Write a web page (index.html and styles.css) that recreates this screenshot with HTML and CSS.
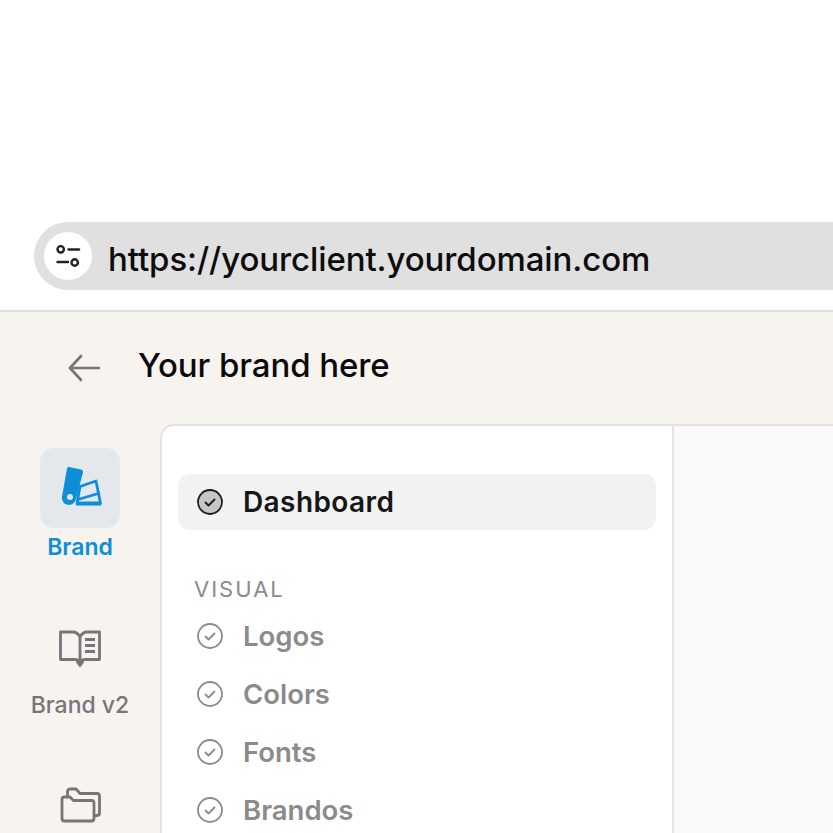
FILE: index.html
```html
<!DOCTYPE html>
<html>
<head>
    <title>Your brand here</title>
    <link rel="stylesheet" href="styles.css">
</head>
<body>
    <div class="top">
        <div class="url-bar">
            <div class="url-icon">
                <svg width="26" height="26" viewBox="0 0 26 26" fill="none" stroke="#222" stroke-width="2.4" stroke-linecap="round">
                    <circle cx="5.7" cy="6.300" r="3.200"/>
                    <path d="M13.500 6.500H24"/>
                    <path d="M2.500 19H13"/>
                    <circle cx="19.700" cy="19.500" r="3.200"/>
                </svg>
            </div>
            <span class="url-text">https://yourclient.yourdomain.com</span>
        </div>
    </div>
    <div class="app">
        <div class="header">
            <svg class="back" width="32" height="28" viewBox="0 0 32 28" fill="none" stroke="#77757a" stroke-width="2.6" stroke-linecap="round" stroke-linejoin="round">
                <path d="M31 14H2"/>
                <path d="M13 2 2 14l11 12"/>
            </svg>
            <span class="brand-title">Your brand here</span>
        </div>
        <div class="content">
            <div class="sidebar">
                <div class="side-item active">
                    <div class="side-icon">
                        <svg width="44" height="44" viewBox="0 0 44 44">
                            <path d="M22 20.500 38 15l4.500 22.500H19z" fill="#e4e8ec" stroke="#0d8fd8" stroke-width="2.800" stroke-linejoin="round"/>
                            <path d="M20 33.500 42 27" fill="none" stroke="#0d8fd8" stroke-width="2.600"/>
                            <path d="M18 35.500h25v4H18z" fill="#0d8fd8"/>
                            <path d="M11 1l12 2.500c1.500.3 2.200 1.500 2 3L18 33c-1 4-4.500 6.500-8.500 5.800C5.500 38 3.300 34 4.100 30L9 2.500c.2-1 1-1.700 2-1.500z" fill="#0d8fd8"/>
                            <circle cx="12" cy="31" r="3" fill="#e4e8ec"/>
                        </svg>
                    </div>
                    <span class="side-label">Brand</span>
                </div>
                <div class="side-item">
                    <div class="side-icon">
                        <svg width="44" height="44" viewBox="0 -1 44 44" fill="none" stroke="#77757a" stroke-width="2.800" stroke-linejoin="round">
                            <path d="M22 9.500c-2-3-4-4.500-7-4.500H2.500v27.500H16c2.500 0 5 .5 6 2 1-1.500 3.500-2 6-2h13.500V5H29c-3 0-5 1.500-7 4.500z"/>
                            <path d="M22 9.500V35"/>
                            <path d="M27 12.500h10M27 18.500h10M27 24.500h10"/>
                            <path d="M19.500 35 22 38.500l2.500-3.500z" fill="#77757a"/>
                        </svg>
                    </div>
                    <span class="side-label">Brand v2</span>
                </div>
                <div class="side-item">
                    <div class="side-icon">
                        <svg width="44" height="36" viewBox="0 0 44 36" fill="none" stroke="#77757a" stroke-width="2.800" stroke-linejoin="round">
                            <path d="M4 12.500c0-1.500 1-2.500 2.500-2.500H12l3.500 3.500h18c1.500 0 2.500 1 2.500 2.500V31.500c0 1.500-1 2.500-2.500 2.500h-27C5 34 4 33 4 31.500z"/>
                            <path d="M9.500 10V4.500C9.500 3 10.500 2 12 2h6l4 4.500h17c1.500 0 2.500 1 2.500 2.500V26c0 1.500-1 2.500-2.500 2.500h-3"/>
                        </svg>
                    </div>
                </div>
            </div>
            <div class="panel">
                <div class="nav">
                    <div class="nav-row selected">
                        <svg class="check" width="28" height="28" viewBox="0 0 28 28" fill="#c6c6c6" stroke="#1a1a1a" stroke-width="1.800" stroke-linecap="round" stroke-linejoin="round">
                            <circle cx="14" cy="14" r="12"/>
                            <path d="m9.500 14.500 3 3 6-6" fill="none"/>
                        </svg>
                        <span>Dashboard</span>
                    </div>
                    <div class="nav-heading">VISUAL</div>
                    <div class="nav-row">
                        <svg class="check" width="28" height="28" viewBox="0 0 28 28" fill="none" stroke="#8b8b8b" stroke-width="1.800" stroke-linecap="round" stroke-linejoin="round">
                            <circle cx="14" cy="14" r="12"/>
                            <path d="m9.500 14.500 3 3 6-6"/>
                        </svg>
                        <span>Logos</span>
                    </div>
                    <div class="nav-row">
                        <svg class="check" width="28" height="28" viewBox="0 0 28 28" fill="none" stroke="#8b8b8b" stroke-width="1.800" stroke-linecap="round" stroke-linejoin="round">
                            <circle cx="14" cy="14" r="12"/>
                            <path d="m9.500 14.500 3 3 6-6"/>
                        </svg>
                        <span>Colors</span>
                    </div>
                    <div class="nav-row">
                        <svg class="check" width="28" height="28" viewBox="0 0 28 28" fill="none" stroke="#8b8b8b" stroke-width="1.800" stroke-linecap="round" stroke-linejoin="round">
                            <circle cx="14" cy="14" r="12"/>
                            <path d="m9.500 14.500 3 3 6-6"/>
                        </svg>
                        <span>Fonts</span>
                    </div>
                    <div class="nav-row">
                        <svg class="check" width="28" height="28" viewBox="0 0 28 28" fill="none" stroke="#8b8b8b" stroke-width="1.800" stroke-linecap="round" stroke-linejoin="round">
                            <circle cx="14" cy="14" r="12"/>
                            <path d="m9.500 14.500 3 3 6-6"/>
                        </svg>
                        <span>Brandos</span>
                    </div>
                </div>
                <div class="preview"></div>
            </div>
        </div>
    </div>
</body>
</html>
```

FILE: styles.css
```css
html, body {
    height: 100%;
}

body {
    margin: 0;
    overflow: hidden;
    background-color: #fff;
    font-family: "Inter", "Liberation Sans", sans-serif;
}

.top {
    height: 310px;
    box-sizing: border-box;
    padding: 222px 0 0 34px;
}

.url-bar {
    display: flex;
    align-items: center;
    height: 68px;
    padding-left: 10px;
    background-color: #e0e0e0;
    border-radius: 34px 0 0 34px;
}

.url-icon {
    display: flex;
    align-items: center;
    justify-content: center;
    width: 48px;
    height: 48px;
    margin-top: -1px;
    border-radius: 50%;
    background-color: #fff;
}

.url-text {
    margin: 5px 0 0 16px;
    font-size: 33px;
    font-weight: 500;
    letter-spacing: -0.1px;
    color: #0c0c0c;
}

.app {
    height: 523px;
    box-sizing: border-box;
    border-top: 2px solid #e0e0e0;
    background-color: #f7f3ee;
    overflow: hidden;
}

.header {
    display: flex;
    align-items: center;
    height: 112px;
    box-sizing: border-box;
    padding: 0 0 6px 68px;
}

.back {
    margin-top: 6px;
}

.brand-title {
    margin-left: 38px;
    font-size: 33px;
    font-weight: 500;
    letter-spacing: -0.1px;
    color: #0a0a0a;
}

.content {
    display: flex;
    height: 409px;
}

.sidebar {
    width: 160px;
    flex-shrink: 0;
    padding-top: 24px;
    box-sizing: border-box;
}

.side-item {
    display: flex;
    flex-direction: column;
    align-items: center;
    margin-bottom: 47px;
}

.side-item:nth-child(2) {
    margin-bottom: 46px;
}

.side-item:nth-child(2) .side-label {
    margin-top: 3px;
}

.side-icon {
    display: flex;
    align-items: center;
    justify-content: center;
    width: 80px;
    height: 80px;
    border-radius: 14px;
}

.side-item.active .side-icon {
    background-color: #e4e8ec;
}

.side-label {
    margin-top: 5px;
    font-size: 23px;
    font-weight: 500;
    line-height: 28px;
    color: #77757a;
}

.side-item.active .side-label {
    font-weight: 600;
    color: #0d8fd8;
}

.panel {
    display: flex;
    flex: 1;
    box-sizing: border-box;
    border: 2px solid #e3e3e3;
    border-right: 0;
    border-bottom: 0;
    border-radius: 14px 0 0 0;
    background-color: #fff;
    overflow: hidden;
}

.nav {
    width: 512px;
    flex-shrink: 0;
    box-sizing: border-box;
    padding: 48px 16px 0;
    border-right: 2px solid #e3e3e3;
}

.nav-row {
    display: flex;
    align-items: center;
    height: 58px;
    padding-left: 18px;
    font-size: 27.5px;
    font-weight: 600;
    color: #8b8b8b;
}

.nav-row.selected {
    height: 56px;
    margin-bottom: 42px;
    border-radius: 12px;
    font-size: 28px;
    letter-spacing: 0.4px;
    background-color: #f2f2f2;
    color: #161616;
}

.check {
    flex-shrink: 0;
    margin-right: 19px;
}

.nav-heading {
    height: 35px;
    padding-left: 16px;
    font-size: 22px;
    line-height: 34px;
    letter-spacing: 2px;
    color: #8b8b8b;
}

.preview {
    flex: 1;
    background-color: #f9f9f9;
}
```
